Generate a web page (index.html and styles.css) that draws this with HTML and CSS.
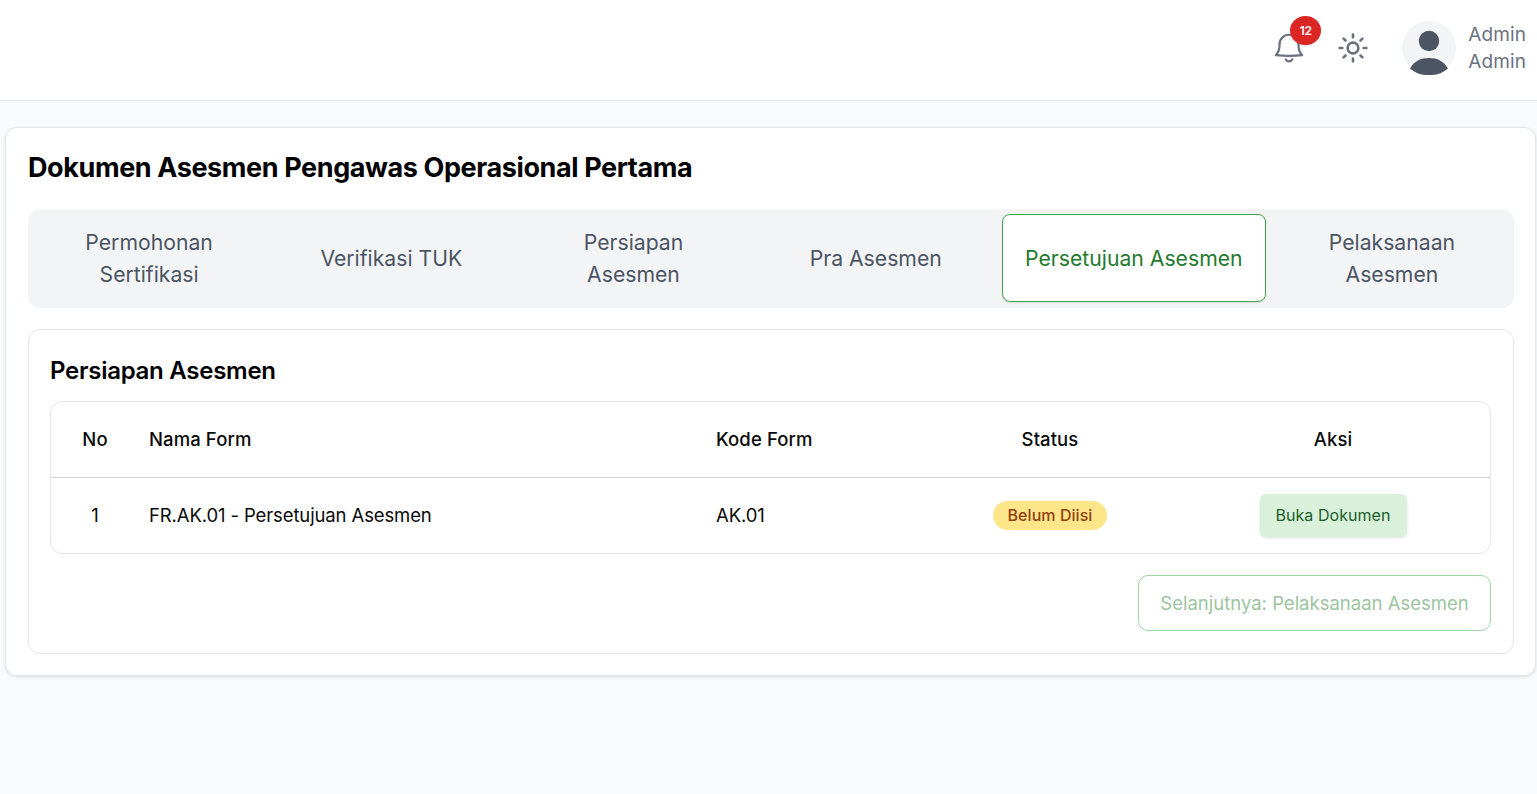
FILE: index.html
```html
<!DOCTYPE html>
<html lang="id">
<head>
<meta charset="utf-8">
<title>Dokumen Asesmen</title>
<link rel="stylesheet" href="styles.css">
</head>
<body>
<header class="topbar">
  <div class="bell">
    <svg class="bell-icon" viewBox="0 0 24 24" fill="none" stroke="#6b7280" stroke-width="1.4" stroke-linecap="round" stroke-linejoin="round"><path d="M20.3 15.9A9 9 0 0 1 18 9.75V9A6 6 0 0 0 6 9v.75a9 9 0 0 1-2.3 6.15c5 .5 11.6.5 16.6 0z"/><path d="M10 18.6a2.2 2.2 0 0 0 4 0"/></svg>
    <span class="badge">12</span>
  </div>
  <svg class="sun" viewBox="0 0 24 24" fill="none" stroke="#6b7280" stroke-width="2" stroke-linecap="round" stroke-linejoin="round"><circle cx="12" cy="12" r="4"/><path d="M12 2v2M12 20v2M4.93 4.93l1.41 1.41M17.66 17.66l1.41 1.41M2 12h2M20 12h2M6.34 17.66l-1.41 1.41M19.07 4.93l-1.41 1.41"/></svg>
  <div class="user">
    <svg class="avatar" viewBox="0 0 54 54"><circle cx="27" cy="27" r="27" fill="#f3f4f6"/><circle cx="27" cy="20" r="10.2" fill="#4b5563"/><path d="M8 47.5C12 40 19 37 27 37s15 3 19 10.5A27 27 0 0 1 27 54 27 27 0 0 1 8 47.5z" fill="#4b5563"/></svg>
    <div class="names"><span>Admin</span><span>Admin</span></div>
  </div>
</header>
<main class="content">
  <section class="card">
    <h1 class="title">Dokumen Asesmen Pengawas Operasional Pertama</h1>
    <nav class="tabs">
      <div class="tab">Permohonan Sertifikasi</div>
      <div class="tab">Verifikasi TUK</div>
      <div class="tab">Persiapan Asesmen</div>
      <div class="tab">Pra Asesmen</div>
      <div class="tab tab-active">Persetujuan Asesmen</div>
      <div class="tab">Pelaksanaan Asesmen</div>
    </nav>
    <section class="panel">
      <h2 class="panel-title">Persiapan Asesmen</h2>
      <div class="table-wrap">
        <div class="row row-head">
          <div class="cell c-no">No</div>
          <div class="cell c-name">Nama Form</div>
          <div class="cell c-code">Kode Form</div>
          <div class="cell c-status">Status</div>
          <div class="cell c-action">Aksi</div>
        </div>
        <div class="row">
          <div class="cell c-no">1</div>
          <div class="cell c-name">FR.AK.01 - Persetujuan Asesmen</div>
          <div class="cell c-code">AK.01</div>
          <div class="cell c-status"><span class="pill">Belum Diisi</span></div>
          <div class="cell c-action"><button class="open-btn">Buka Dokumen</button></div>
        </div>
      </div>
      <div class="next-row"><button class="next-btn">Selanjutnya: Pelaksanaan Asesmen</button></div>
    </section>
  </section>
</main>
</body>
</html>
```

FILE: styles.css
```css
* { box-sizing: border-box; }
html, body { margin: 0; height: 100%; }
body {
  background: #f9fafb;
  font-family: Inter, "Noto Sans", sans-serif;
  color: #0a0a0a;
  overflow: hidden;
}
.topbar {
  height: 101px;
  background: #fff;
  border-bottom: 1px solid #e5e7eb;
  display: flex;
  align-items: center;
  justify-content: flex-end;
  padding-right: 11px;
}
.bell { position: relative; width: 38px; height: 38px; margin-right: 29px; margin-top: -3px; }
.bell-icon { width: 38px; height: 38px; display: block; }
.badge {
  position: absolute;
  left: 20px;
  top: -13.5px;
  width: 31px;
  height: 29px;
  border-radius: 50%;
  background: #dc2626;
  color: #fff;
  font-size: 12px;
  font-weight: 600;
  letter-spacing: -0.3px;
  display: flex;
  align-items: center;
  justify-content: center;
  box-shadow: 0 1px 2px rgba(0,0,0,.15);
}
.sun { width: 32px; height: 32px; margin-right: 33px; margin-top: -4px; }
.user { display: flex; align-items: center; gap: 12px; margin-top: -4px; }
.avatar { width: 54px; height: 54px; display: block; }
.names {
  display: flex;
  flex-direction: column;
  gap: 3px;
  font-size: 19px;
  line-height: 24px;
  color: #6b7280;
  letter-spacing: 0.1px;
}
.content { padding: 26px 0 0 5px; }
.card {
  width: 1531px;
  height: 549px;
  background: #fff;
  border: 1px solid #e5e7eb;
  border-radius: 12px;
  box-shadow: 0 1px 3px rgba(0,0,0,.12);
  padding: 22px 21px 22px 22px;
}
.title {
  margin: 0 0 23px;
  font-size: 27px;
  line-height: 36px;
  font-weight: 700;
  letter-spacing: -0.4px;
  color: #000;
}
.tabs {
  display: flex;
  gap: 10px;
  padding: 5px 6px 6px 5px;
  background: #f3f4f6;
  border-radius: 12px;
  height: 99px;
  margin-bottom: 21px;
}
.tab {
  flex: 1 1 0;
  display: flex;
  align-items: center;
  justify-content: center;
  text-align: center;
  padding: 0 40px;
  font-size: 21.2px;
  line-height: 32px;
  color: #4b5563;
}
.tab-active {
  flex: 0 0 264px;
  padding: 0;
  background: #fff;
  border: 1px solid #3fa949;
  border-radius: 8px;
  color: #237a2e;
  box-shadow: 0 1px 2px rgba(0,0,0,.1);
  white-space: nowrap;
}
.panel {
  height: 325px;
  border: 1px solid #e5e7eb;
  border-radius: 12px;
  padding: 23px 22px 22px 21px;
}
.panel-title {
  margin: 0 0 12px;
  font-size: 24px;
  line-height: 36px;
  font-weight: 600;
  letter-spacing: -0.27px;
  color: #000;
}
.table-wrap {
  border: 1px solid #e5e7eb;
  border-radius: 12px;
  height: 153px;
}
.row {
  display: flex;
  align-items: center;
  height: 75px;
  font-size: 18.5px;
  letter-spacing: -0.12px;
}
.row-head { height: 76px; border-bottom: 1px solid #d1d5db; font-weight: 450; letter-spacing: 0.1px; }
.row-head .cell, .c-no, .c-name, .c-code { padding-bottom: 2px; }
.c-no { flex: 0 0 88px; text-align: center; }
.c-name { flex: 0 0 567px; padding-left: 10px; }
.c-code { flex: 0 0 218px; padding-left: 10px; }
.c-status { flex: 0 0 252px; text-align: center; }
.c-action { flex: 0 0 314px; text-align: center; }
.pill {
  display: inline-block;
  height: 29px;
  line-height: 29px;
  padding: 0 14.5px;
  border-radius: 15px;
  background: #fde68a;
  color: #92400e;
  font-size: 16px;
  font-weight: 500;
  letter-spacing: 0.05px;
}
.open-btn {
  width: 147px;
  height: 43px;
  border: 0;
  border-radius: 6px;
  background: #d9f0da;
  color: #1b5e2a;
  font: 400 16px Inter, sans-serif;
  letter-spacing: 0.05px;
  box-shadow: 0 1px 3px rgba(0,0,0,.12);
  padding: 0 0 2px;
}
.next-row { display: flex; justify-content: flex-end; margin-top: 21px; }
.next-btn {
  width: 353px;
  height: 56px;
  background: #fff;
  border: 1px solid #9ed8a4;
  border-radius: 10px;
  color: #9cc5a0;
  font: 400 18.5px Inter, sans-serif;
  letter-spacing: 0;
  padding: 0;
}
```
